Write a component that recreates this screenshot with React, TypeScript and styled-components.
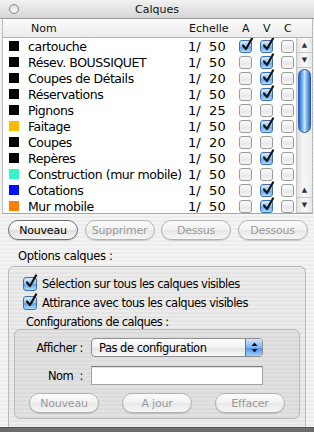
import React from "react";
import styled, { createGlobalStyle } from "styled-components";

const Global = createGlobalStyle`
  html, body { margin: 0; padding: 0; }
  body { width: 314px; height: 432px; overflow: hidden; background: #6b6b6b; font-family: "DejaVu Sans", "Liberation Sans", sans-serif; }
`;

const FONT = `"DejaVu Sans", "Liberation Sans", sans-serif`;

const Window = styled.div`
  width: 314px;
  height: 428px;
  box-sizing: border-box;
  display: flex;
  flex-direction: column;
  background: repeating-linear-gradient(#ededed 0 2px, #f4f4f4 2px 4px);
  border-bottom: 1px solid #555;
  font-family: ${FONT};
  overflow: hidden;
`;

const TitleBar = styled.div`
  height: 18px;
  flex: none;
  position: relative;
  display: flex;
  align-items: center;
  justify-content: center;
  background: linear-gradient(#f2f2f2, #d6d6d6);
  border-bottom: 1px solid #9a9a9a;
  font-size: 11px;
  color: #111;
`;

const CloseDot = styled.div`
  position: absolute;
  left: 9px;
  top: 4px;
  width: 10px;
  height: 10px;
  border-radius: 50%;
  border: 1px solid #8c8c8c;
  background: radial-gradient(circle at 50% 70%, #ffffff, #cfcfcf);
  box-sizing: border-box;
`;

const ListFrame = styled.div`
  margin: 0 1px 0 2px;
  border-left: 1px solid #bdbdbd;
  border-right: 1px solid #bdbdbd;
  border-bottom: 1px solid #a8a8a8;
  background: #fff;
  display: flex;
  flex-direction: column;
  flex: none;
`;

const Header = styled.div`
  height: 18px;
  display: grid;
  grid-template-columns: 19px 1fr 50px 21px 21px 18px 15px;
  padding-left: 6px;
  align-items: center;
  background: linear-gradient(#fbfbfb, #ececec);
  border-bottom: 1px solid #b3b3b3;
  font-size: 11px;
  color: #111;
`;

const HeadCell = styled.div<{ $pad?: number }>`
  padding-left: ${(p) => p.$pad ?? 0}px;
`;

const ListBody = styled.div`
  display: flex;
  height: 175px;
`;

const Rows = styled.div`
  flex: 1;
  overflow: hidden;
`;

const Row = styled.div`
  height: 16px;
  display: grid;
  grid-template-columns: 19px 1fr 50px 21px 21px 18px;
  padding-left: 6px;
  align-items: center;
  font-size: 13px;
  color: #000;
`;

const Swatch = styled.div<{ $c: string }>`
  width: 10px;
  height: 10px;
  background: ${(p) => p.$c};
`;

const Name = styled.div`
  white-space: nowrap;
  overflow: hidden;
  font-size: 12.5px;
  letter-spacing: -0.45px;
`;

const Scale = styled.div`
  display: flex;
  padding-left: 2px;
  white-space: nowrap;
`;

const Num = styled.span`
  display: inline-block;
  width: 25px;
  text-align: right;
`;

const BoxCell = styled.div`
  padding-left: 3px;
  display: flex;
  align-items: center;
`;

const Box = styled.div<{ $on?: boolean }>`
  position: relative;
  width: 13px;
  height: 13px;
  box-sizing: border-box;
  border-radius: 3px;
  border: 1px solid ${(p) => (p.$on ? "#3f6fa8" : "#9b9b9b")};
  background: ${(p) =>
    p.$on
      ? "linear-gradient(#d8ecff 0%, #8fc2f2 50%, #5da2e6 51%, #a9dbff 100%)"
      : "linear-gradient(#fdfdfd, #e9e9e9 60%, #f6f6f6)"};
`;

const Tick = styled.svg`
  position: absolute;
  left: 1px;
  top: -4px;
  width: 13px;
  height: 14px;
`;

const TickMark = () => (
  <Tick viewBox="0 0 13 14">
    <path d="M2 8.5 L5 12 L11 1.5" fill="none" stroke="#111" strokeWidth="2.2" strokeLinecap="round" strokeLinejoin="round" />
  </Tick>
);

const Check = ({ on }: { on?: boolean }) => <Box $on={on}>{on && <TickMark />}</Box>;

const Scrollbar = styled.div`
  width: 15px;
  flex: none;
  display: flex;
  flex-direction: column;
  background: linear-gradient(90deg, #dcdcdc, #f6f6f6 40%, #eeeeee);
  border-left: 1px solid #c4c4c4;
`;

const Arrow = styled.div`
  height: 14px;
  display: flex;
  align-items: center;
  justify-content: center;
  background: linear-gradient(90deg, #e4e4e4, #fafafa 50%, #e8e8e8);
  border-bottom: 1px solid #c8c8c8;
  font-size: 7px;
  color: #333;
`;

const Thumb = styled.div`
  height: 62px;
  margin: 1px 1px 0 1px;
  border-radius: 7px;
  background: linear-gradient(90deg, #2a63c6 0%, #76b1f4 30%, #cbe6ff 50%, #6fa9ee 75%, #2b6ad0 100%);
  border: 1px solid #2d5ea8;
`;

const Track = styled.div`
  flex: 1;
`;

const ButtonRow = styled.div`
  display: grid;
  grid-template-columns: repeat(4, 70px);
  column-gap: 6.5px;
  padding: 6px 0 0 8px;
`;

const Pill = styled.div<{ $on?: boolean }>`
  height: 20px;
  box-sizing: border-box;
  border-radius: 10px;
  display: flex;
  align-items: center;
  justify-content: center;
  font-size: 11px;
  letter-spacing: -0.2px;
  color: ${(p) => (p.$on ? "#000" : "#9a9a9a")};
  border: 1px solid ${(p) => (p.$on ? "#6f6f6f" : "#b4b4b4")};
  background: ${(p) =>
    p.$on
      ? "linear-gradient(#ffffff, #f1f1f1 50%, #dedede 51%, #f6f6f6)"
      : "linear-gradient(#fbfbfb, #f1f1f1 50%, #e8e8e8 51%, #f6f6f6)"};
  box-shadow: 0 1px 1px rgba(0, 0, 0, 0.15);
`;

const SectionLabel = styled.div`
  font-size: 11.5px;
  letter-spacing: -0.3px;
  color: #000;
  padding: 9px 0 0 18px;
  height: 17px;
`;

const Group = styled.div`
  margin: 0 8px 0 8px;
  flex: 1;
  border: 1px solid #b9b9b9;
  border-bottom: none;
  border-radius: 6px 6px 0 0;
  background: rgba(0, 0, 0, 0.035);
  padding: 7px 5px 0 5px;
  display: flex;
  flex-direction: column;
`;

const OptRow = styled.div`
  display: flex;
  align-items: center;
  gap: 5px;
  height: 19px;
  padding-left: 9px;
  font-size: 11.5px;
  color: #000;
  letter-spacing: -0.5px;
`;

const BigBox = styled(Box)`
  width: 14px;
  height: 14px;
`;

const SubLabel = styled.div`
  font-size: 11.5px;
  padding: 3px 0 0 12px;
  height: 14px;
  letter-spacing: -0.55px;
`;

const Inner = styled.div`
  border: 1px solid #b9b9b9;
  border-radius: 6px;
  background: rgba(0, 0, 0, 0.035);
  height: 90px;
  box-sizing: border-box;
  padding: 8px 0 0 0;
  display: flex;
  flex-direction: column;
`;

const FieldRow = styled.div`
  display: grid;
  grid-template-columns: 68px 172px;
  column-gap: 8px;
  align-items: center;
  height: 19px;
  margin-bottom: 9px;
  font-size: 11.5px;
  letter-spacing: -0.5px;
`;

const FieldLabel = styled.div`
  text-align: right;
  white-space: pre;
`;

const Popup = styled.div`
  height: 19px;
  box-sizing: border-box;
  border: 1px solid #8e8e8e;
  border-radius: 4px;
  display: flex;
  align-items: center;
  background: linear-gradient(#ffffff, #f1f1f1 50%, #e3e3e3 51%, #f7f7f7);
  overflow: hidden;
`;

const PopupText = styled.div`
  flex: 1;
  padding-left: 7px;
`;

const PopupArrows = styled.div`
  width: 16px;
  align-self: stretch;
  border-left: 1px solid #4a78bd;
  background: linear-gradient(#cfe6ff, #7fb5f0 50%, #4f92e2 51%, #9bd0ff);
  display: flex;
  align-items: center;
  justify-content: center;
`;

const TextField = styled.div`
  height: 19px;
  box-sizing: border-box;
  background: #fff;
  border: 1px solid #a5a5a5;
  border-top-color: #7d7d7d;
  box-shadow: inset 0 1px 1px rgba(0, 0, 0, 0.12);
`;

const BottomButtons = styled.div`
  display: grid;
  grid-template-columns: repeat(3, 70px);
  column-gap: 23px;
  padding-left: 14px;
  margin-top: -1px;
`;

const layers = [
  { c: "#000", n: "cartouche", s: "50", a: true, v: true },
  { c: "#000", n: "Résev. BOUSSIQUET", s: "50", v: true },
  { c: "#000", n: "Coupes de Détails", s: "20", v: true },
  { c: "#000", n: "Réservations", s: "50", v: true },
  { c: "#000", n: "Pignons", s: "25" },
  { c: "#ffbb00", n: "Faitage", s: "50", v: true },
  { c: "#000", n: "Coupes", s: "20" },
  { c: "#000", n: "Repères", s: "50", v: true },
  { c: "#33f5c8", n: "Construction (mur mobile)", s: "50" },
  { c: "#0010ff", n: "Cotations", s: "50", v: true },
  { c: "#ff8000", n: "Mur mobile", s: "50", v: true },
];

export default function App() {
  return (
    <>
      <Global />
      <Window>
        <TitleBar>
          <CloseDot />
          Calques
        </TitleBar>
        <ListFrame>
          <Header>
            <span />
            <HeadCell $pad={3}>Nom</HeadCell>
            <HeadCell $pad={2}>Echelle</HeadCell>
            <HeadCell $pad={5}>A</HeadCell>
            <HeadCell $pad={5}>V</HeadCell>
            <HeadCell $pad={5}>C</HeadCell>
            <span />
          </Header>
          <ListBody>
            <Rows>
              {layers.map((l) => (
                <Row key={l.n}>
                  <Swatch $c={l.c} />
                  <Name>{l.n}</Name>
                  <Scale>
                    1/<Num>{l.s}</Num>
                  </Scale>
                  <BoxCell>
                    <Check on={l.a} />
                  </BoxCell>
                  <BoxCell>
                    <Check on={l.v} />
                  </BoxCell>
                  <BoxCell>
                    <Check />
                  </BoxCell>
                </Row>
              ))}
            </Rows>
            <Scrollbar>
              <Arrow>▲</Arrow>
              <Arrow>▼</Arrow>
              <Thumb />
              <Track />
              <Arrow>▲</Arrow>
              <Arrow>▼</Arrow>
            </Scrollbar>
          </ListBody>
        </ListFrame>
        <ButtonRow>
          <Pill $on>Nouveau</Pill>
          <Pill>Supprimer</Pill>
          <Pill>Dessus</Pill>
          <Pill>Dessous</Pill>
        </ButtonRow>
        <SectionLabel>Options calques :</SectionLabel>
        <Group>
          <OptRow>
            <BigBox $on>
              <TickMark />
            </BigBox>
            Sélection sur tous les calques visibles
          </OptRow>
          <OptRow>
            <BigBox $on>
              <TickMark />
            </BigBox>
            Attirance avec tous les calques visibles
          </OptRow>
          <SubLabel>Configurations de calques :</SubLabel>
          <Inner>
            <FieldRow>
              <FieldLabel>Afficher :</FieldLabel>
              <Popup>
                <PopupText>Pas de configuration</PopupText>
                <PopupArrows>
                  <svg width="7" height="11" viewBox="0 0 7 11">
                    <path d="M3.5 0.5 L6.5 4 L0.5 4 Z M0.5 7 L6.5 7 L3.5 10.5 Z" fill="#111" />
                  </svg>
                </PopupArrows>
              </Popup>
            </FieldRow>
            <FieldRow>
              <FieldLabel>{"Nom  :"}</FieldLabel>
              <TextField />
            </FieldRow>
            <BottomButtons>
              <Pill>Nouveau</Pill>
              <Pill>A jour</Pill>
              <Pill>Effacer</Pill>
            </BottomButtons>
          </Inner>
        </Group>
      </Window>
    </>
  );
}
